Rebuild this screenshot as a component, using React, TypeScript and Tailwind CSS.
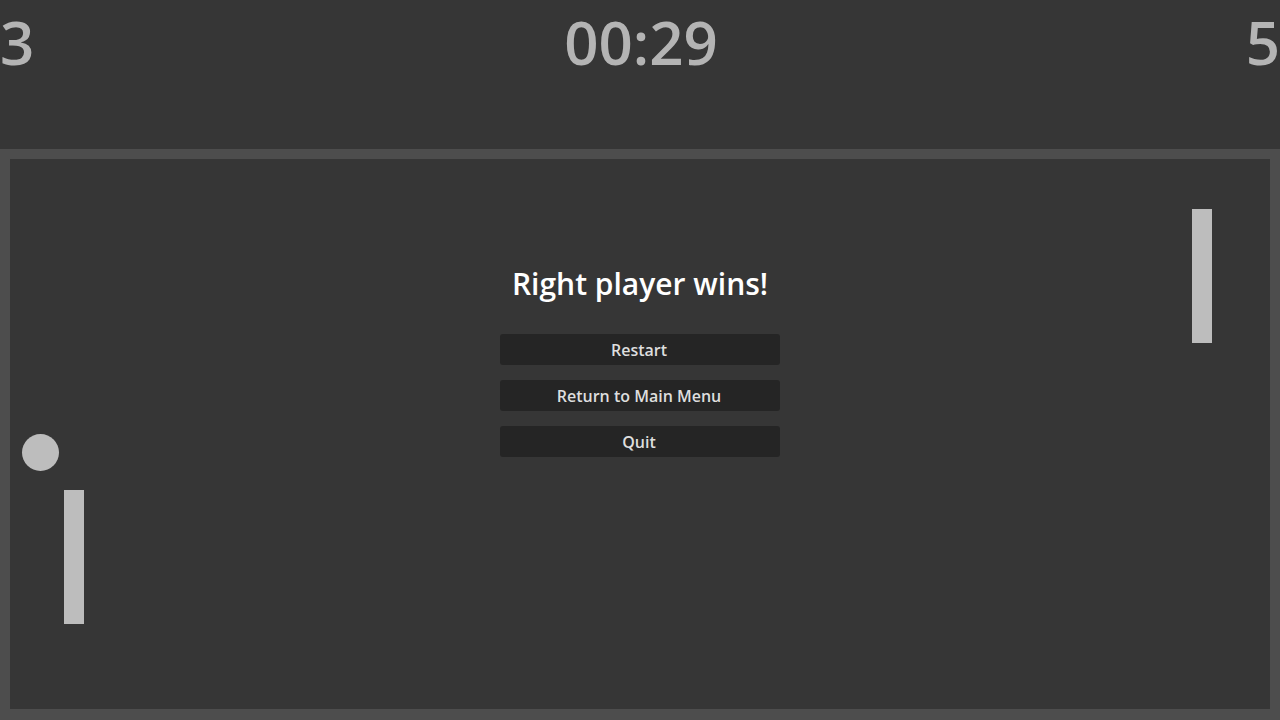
const font = { fontFamily: '"Open Sans", "Noto Sans", sans-serif' };

const Paddle = ({ className }: { className: string }) => (
  <div className={`absolute w-[20px] h-[134px] bg-[#bdbdbd] ${className}`} />
);

const MenuButton = ({ label }: { label: string }) => (
  <button className="w-[280px] h-[31px] rounded-[3px] bg-[#252525] text-[16px] font-semibold text-[#dedede] leading-none">
    <span className="-ml-[2px]">{label}</span>
  </button>
);

export default function App() {
  return (
    <div className="w-[1280px] h-[720px] overflow-hidden bg-[#363636] flex flex-col" style={font}>
      {/* scoreboard */}
      <div className="h-[149px] flex justify-between items-start text-[60px] font-semibold leading-normal text-[#b4b4b4]">
        <span className="-mt-[3px]">3</span>
        <span className="-mt-[3px] ml-[2px]">00:29</span>
        <span className="-mt-[3px]">5</span>
      </div>

      {/* arena */}
      <div className="flex-1 bg-[#4d4d4d] p-[10px] pb-[11px]">
        <div className="relative h-full bg-[#363636]">
          <Paddle className="left-[54px] top-[331px]" />
          <Paddle className="left-[1182px] top-[50px]" />
          <div className="absolute left-[12px] top-[275px] w-[37px] h-[37px] rounded-full bg-[#bdbdbd]" />

          <div className="flex flex-col items-center pt-[102px]">
            <h1 className="text-[30px] font-semibold leading-normal text-white">Right player wins!</h1>
            <div className="mt-[28px] flex flex-col gap-[15px]">
              <MenuButton label="Restart" />
              <MenuButton label="Return to Main Menu" />
              <MenuButton label="Quit" />
            </div>
          </div>
        </div>
      </div>
    </div>
  );
}
